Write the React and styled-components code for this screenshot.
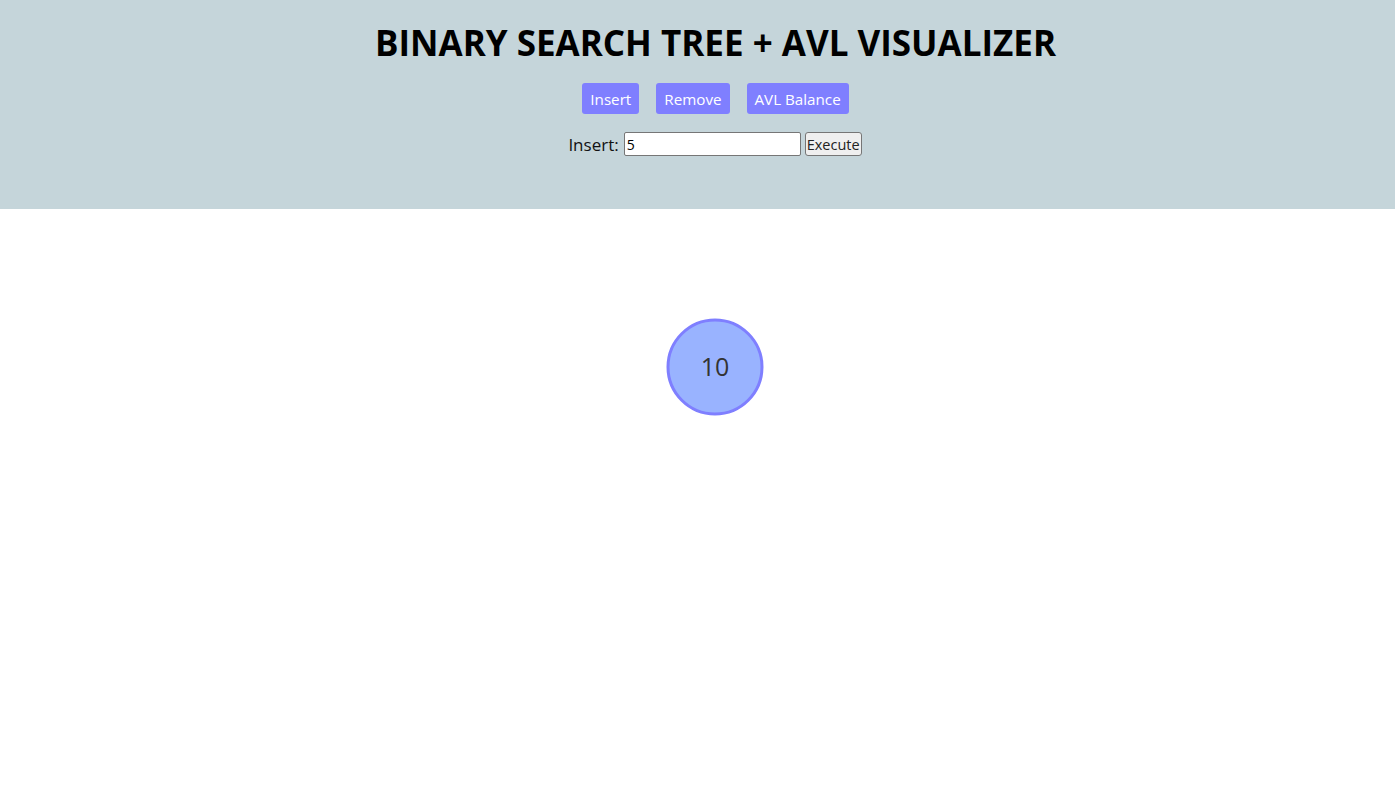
import React, { useState } from 'react';
import styled, { createGlobalStyle } from 'styled-components';

const GlobalStyle = createGlobalStyle`
	html, body {
		margin: 0;
		padding: 0;
		background: #ffffff;
		font-family: "Open Sans", "Noto Sans", sans-serif;
	}
`;

const Header = styled.header`
	height: 209px;
	background: #c5d5da;
	display: flex;
	flex-direction: column;
	align-items: center;
	box-sizing: border-box;
	padding-top: 20px;
`;

const Title = styled.h1`
	margin: 0;
	font-size: 35px;
	font-weight: 700;
	line-height: 46px;
	color: #000;
	padding-left: 36px;
`;

const ButtonRow = styled.div`
	display: flex;
	gap: 17px;
	margin-top: 17px;
	padding-left: 36px;
`;

const ModeButton = styled.button`
	height: 31px;
	padding: 1px 8px 0;
	border: none;
	border-radius: 3px;
	background: #7f7fff;
	color: #ffffff;
	font-family: "Open Sans", sans-serif;
	font-size: 15.2px;
	cursor: pointer;
`;

const Form = styled.div`
	display: flex;
	align-items: center;
	margin-top: 18px;
	padding-left: 35px;
`;

const Label = styled.label`
	font-size: 17px;
	color: #111;
	margin-right: 5px;
`;

const Input = styled.input`
	width: 177px;
	height: 24px;
	box-sizing: border-box;
	border: 1px solid #767676;
	border-radius: 2px;
	padding: 0 2px;
	font-family: "Open Sans", sans-serif;
	font-size: 14px;
	color: #000;
`;

const Execute = styled.button`
	height: 24px;
	margin-left: 4px;
	padding: 0 1px;
	box-sizing: border-box;
	border: 1px solid #767676;
	border-radius: 3px;
	background: #efefef;
	font-family: "Open Sans", sans-serif;
	font-size: 14.5px;
	color: #222;
`;

const Canvas = styled.svg`
	display: block;
	width: 100%;
	height: 582px;
`;

const nodes = [{ value: 10, x: 715, y: 158 }];

export default function App() {
	const [value, setValue] = useState('5');
	return (
		<>
			<GlobalStyle />
			<Header>
				<Title>BINARY SEARCH TREE + AVL VISUALIZER</Title>
				<ButtonRow>
					<ModeButton>Insert</ModeButton>
					<ModeButton>Remove</ModeButton>
					<ModeButton>AVL Balance</ModeButton>
				</ButtonRow>
				<Form>
					<Label>Insert:</Label>
					<Input value={value} onChange={e => setValue(e.target.value)} />
					<Execute>Execute</Execute>
				</Form>
			</Header>
			<Canvas>
				{nodes.map(n => (
					<g key={n.value}>
						<circle cx={n.x} cy={n.y} r={47} fill="#99b3ff" stroke="#7f7fff" strokeWidth="3" />
						<text
							x={n.x}
							y={n.y + 9}
							textAnchor="middle"
							fontFamily="Open Sans, sans-serif"
							fontSize="25"
							fill="#333"
						>
							{n.value}
						</text>
					</g>
				))}
			</Canvas>
		</>
	);
}
